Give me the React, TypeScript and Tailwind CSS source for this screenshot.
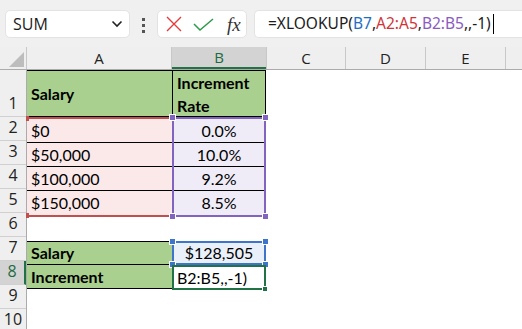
import React from "react";

const cellFont = { fontFamily: "Lato, 'Open Sans', sans-serif" };
const uiFont = { fontFamily: "'Open Sans', 'Noto Sans', sans-serif" };

const rows = [1, 2, 3, 4, 5, 6, 7, 8, 9, 10];

function Toolbar() {
  return (
    <div className="flex h-[47px] items-start bg-[#f0f0f0] pt-[10px] pl-[5px]" style={uiFont}>
      <div className="flex h-[28px] w-[125px] items-center justify-between rounded-[5px] border border-[#e3e3e3] bg-white pl-[7px] pr-[6px]">
        <span className="text-[16px] text-[#1b1b1b]">SUM</span>
        <svg width="12" height="8" viewBox="0 0 12 8">
          <path d="M1.5 1.5 L6 6 L10.5 1.5" fill="none" stroke="#222" strokeWidth="1.6" />
        </svg>
      </div>
      <div className="flex w-[27px] flex-col items-center gap-[3px] pt-[8px]">
        <span className="h-[3px] w-[3px] bg-[#555]" />
        <span className="h-[3px] w-[3px] bg-[#555]" />
        <span className="h-[3px] w-[3px] bg-[#555]" />
      </div>
      <div className="flex h-[28px] w-[90px] items-center rounded-[5px] border border-[#e3e3e3] bg-white pl-[8px]">
        <svg width="16" height="16" viewBox="0 0 16 16">
          <path d="M1 1 L15 15 M15 1 L1 15" stroke="#e23b3b" strokeWidth="1.4" />
        </svg>
        <svg className="ml-[11px]" width="21" height="13" viewBox="0 0 21 13">
          <path d="M1 6 L7 12 L20 1" fill="none" stroke="#2e9b4c" strokeWidth="1.5" />
        </svg>
        <span
          className="ml-[13px] text-[19px] italic leading-none text-[#333]"
          style={{ fontFamily: "'Liberation Serif', serif" }}
        >
          fx
        </span>
      </div>
      <div
        className="ml-[7px] flex h-[28px] flex-1 items-center rounded-l-[5px] border border-r-0 border-[#e3e3e3] bg-white pl-[13px] text-[15.5px] text-[#1b1b1b]"
        style={{ fontFamily: "'Noto Sans', sans-serif" }}
      >
        <span>=XLOOKUP(</span>
        <span className="text-[#1f6fc5]">B7</span>
        <span>,</span>
        <span className="text-[#d13438]">A2:A5</span>
        <span>,</span>
        <span className="text-[#8a5cc2]">B2:B5</span>
        <span>,,-1)</span>
        <span className="ml-[2px] h-[20px] w-px bg-black" />
      </div>
    </div>
  );
}

function ColHeaders() {
  return (
    <div className="flex h-[23px] border-b border-[#ababab] bg-[#efefef] text-[15px] text-[#222]" style={uiFont}>
      <div className="relative w-[27px] border-r border-[#c8c8c8]">
        <svg className="absolute bottom-[2px] right-[2px]" width="15" height="15" viewBox="0 0 15 15">
          <path d="M15 0 L15 15 L0 15 Z" fill="#bdbdbd" />
        </svg>
      </div>
      <div className="flex w-[145px] items-center justify-center border-r border-[#c8c8c8]">A</div>
      <div className="flex w-[94px] items-center justify-center border-b-2 border-b-[#217346] bg-[#d3d3d3] text-[#1e6b41]">B</div>
      <div className="flex w-[80px] items-center justify-center border-x border-[#c8c8c8]">C</div>
      <div className="flex w-[80px] items-center justify-center border-r border-[#c8c8c8]">D</div>
      <div className="flex w-[80px] items-center justify-center border-r border-[#c8c8c8]">E</div>
      <div className="flex-1" />
    </div>
  );
}

function RowHeaders() {
  return (
    <div className="w-[27px] shrink-0 border-r border-[#ababab] bg-[#efefef] text-[16px] text-[#222]" style={uiFont}>
      {rows.map((r) => (
        <div
          key={r}
          className={
            "flex items-end justify-center border-b border-[#d0d0d0] pb-[1px] " +
            (r === 1 ? "h-[47px] " : "h-[24px] ") +
            (r === 8 ? "border-r-2 border-r-[#217346] bg-[#d3d3d3] text-[#1e6b41]" : "")
          }
        >
          {r}
        </div>
      ))}
    </div>
  );
}

function Handle({ className, color }: { className: string; color: string }) {
  return <span className={"absolute h-[7px] w-[7px] border border-white " + className} style={{ background: color }} />;
}

function Sheet() {
  const data = [
    ["$0", "0.0%"],
    ["$50,000", "10.0%"],
    ["$100,000", "9.2%"],
    ["$150,000", "8.5%"],
  ];
  return (
    <div className="relative flex-1 bg-white text-[16px] text-black" style={cellFont}>
      {/* row 1 */}
      <div className="flex h-[47px]">
        <div className="flex w-[145px] items-center border-y border-black bg-[#a9d08e] pl-[4px] font-bold">Salary</div>
        <div className="flex w-[94px] flex-col justify-center border border-black bg-[#a9d08e] pl-[4px] font-bold leading-[23px]">
          <span>Increment</span>
          <span>Rate</span>
        </div>
      </div>
      {/* rows 2-5 */}
      <div className="relative flex">
        <div className="relative w-[145px] border-y-2 border-[#c0504d]">
          {data.map((d, i) => (
            <div
              key={i}
              className={"flex h-[24px] items-center bg-[#fbe9e9] pl-[4px] " + (i < 3 ? "border-b border-black" : "")}
            >
              {d[0]}
            </div>
          ))}
        </div>
        <div className="relative w-[94px] border-2 border-[#8064c0]">
          {data.map((d, i) => (
            <div
              key={i}
              className={"flex h-[24px] items-center justify-center bg-[#efecf7] " + (i < 3 ? "border-b border-black" : "")}
            >
              {d[1]}
            </div>
          ))}
          <Handle className="-left-[5px] -top-[5px]" color="#8064c0" />
          <Handle className="-right-[5px] -top-[5px]" color="#8064c0" />
          <Handle className="-left-[5px] -bottom-[5px]" color="#8064c0" />
          <Handle className="-right-[5px] -bottom-[5px]" color="#8064c0" />
        </div>
        <span className="absolute -top-[1px] left-[-1px] h-[5px] w-[3px] bg-[#c0504d]" />
        <span className="absolute -bottom-[1px] left-[-1px] h-[5px] w-[3px] bg-[#c0504d]" />
      </div>
      {/* row 6 */}
      <div className="h-[24px]" />
      {/* rows 7-8 */}
      <div className="flex">
        <div className="w-[145px]">
          <div className="flex h-[24px] items-center border-y border-black bg-[#a9d08e] pl-[4px] font-bold">Salary</div>
          <div className="flex h-[24px] items-center border-b border-black bg-[#a9d08e] pl-[4px] font-bold">Increment</div>
        </div>
        <div className="w-[94px]">
          <div className="relative flex h-[24px] items-center justify-center border-2 border-[#3e74c9] bg-[#eaf0fa]">
            $128,505
            <Handle className="-left-[5px] -top-[5px]" color="#3e74c9" />
            <Handle className="-right-[5px] -top-[5px]" color="#3e74c9" />
            <Handle className="-left-[5px] -bottom-[5px]" color="#3e74c9" />
            <Handle className="-right-[5px] -bottom-[5px]" color="#3e74c9" />
          </div>
          <div className="relative flex h-[25px] items-center border-2 border-[#217346] bg-white pl-[3px]">
            B2:B5,,-1)
            <span className="absolute -bottom-[4px] -right-[4px] h-[6px] w-[6px] border border-white bg-[#217346]" />
          </div>
        </div>
      </div>
    </div>
  );
}

export default function App() {
  return (
    <div className="h-[329px] w-[522px] overflow-hidden bg-white">
      <Toolbar />
      <ColHeaders />
      <div className="flex">
        <RowHeaders />
        <Sheet />
      </div>
    </div>
  );
}
